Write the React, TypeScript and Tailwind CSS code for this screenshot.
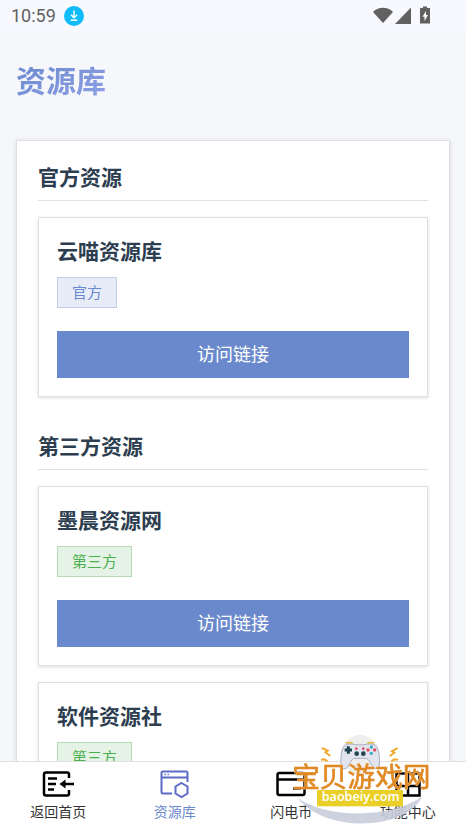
import clsx from "clsx";
import type { ReactNode } from "react";

type Resource = { name: string; tag: string; official?: boolean };

const sections: { title: string; items: Resource[] }[] = [
  {
    title: "官方资源",
    items: [{ name: "云喵资源库", tag: "官方", official: true }],
  },
  {
    title: "第三方资源",
    items: [
      { name: "墨晨资源网", tag: "第三方" },
      { name: "软件资源社", tag: "第三方" },
    ],
  },
];

const StatusBar = () => {
  return (
    <div className="flex h-[31px] shrink-0 items-center justify-between bg-[#f8f8ff] pl-[11px] pr-[35px] text-[#616161]">
      <div className="flex items-center gap-2">
        <span className="font-[Roboto,sans-serif] text-[18px]">10:59</span>
        <svg className="size-5" viewBox="0 0 20 20" fill="none">
          <circle cx="10" cy="10" r="10" fill="#0fbcf9" />
          <path
            d="M10 4.5v7M7 8.8l3 3 3-3M6.7 14.2h6.6"
            stroke="#fff"
            strokeWidth="1.4"
          />
        </svg>
      </div>
      <svg className="h-5 w-[58px]" viewBox="0 0 58 20" fill="#616161">
        <path d="M0 6C5.5 0.400 14.5 0.400 20 6L10 17z" />
        <path d="M38 1.500v16.500H22z" />
        <path d="M50 0.500h4v1.500h3v15.500H47V2h3z" />
        <path d="M53 5l-3.500 5.800h2v4.200l3.500-6h-2z" fill="#fff" />
      </svg>
    </div>
  );
};

const ResourceCard = ({ name, tag, official }: Resource) => {
  return (
    <article className="border border-[#e0e0e0] bg-white p-[18px] shadow-[0_1px_3px_rgba(0,0,0,0.14)]">
      <h3 className="text-[21px] font-bold leading-[29px]">{name}</h3>
      <div className="mt-3 flex">
        <span
          className={clsx(
            "border px-[14px] pb-[2px] text-[15px] leading-[27px]",
            official
              ? "border-[#c2cde8] bg-[#e8ecf8] text-[#6a89cc]"
              : "border-[#b5dcb7] bg-[#e4f3e5] text-[#4caf50]"
          )}
        >
          {tag}
        </span>
      </div>
      <button
        type="button"
        className="mt-[23px] block h-[47px] w-full bg-[#6a89cc] pb-[2px] text-[18px] text-white"
      >
        访问链接
      </button>
    </article>
  );
};

const Library = () => {
  return (
    <div className="mx-4 mt-10 flex flex-col gap-[34px] border border-[#e0e0e0] bg-white p-[21px] shadow-[0_1px_5px_rgba(0,0,0,0.12)]">
      {sections.map((section) => (
        <section key={section.title}>
          <h2 className="border-b border-[#e0e0e0] pb-[9px] text-[21px] font-bold leading-[29px]">
            {section.title}
          </h2>
          <div className="mt-4 flex flex-col gap-4">
            {section.items.map((item) => (
              <ResourceCard key={item.name} {...item} />
            ))}
          </div>
        </section>
      ))}
    </div>
  );
};

const BackIcon = () => (
  <svg className="size-8" viewBox="0 0 32 32" fill="none" stroke="#000">
    <path
      d="M27 10V6.500a2 2 0 0 0-2-2H4a2 2 0 0 0-2 2v19a2 2 0 0 0 2 2h21a2 2 0 0 0 2-2V22"
      strokeWidth="2.500"
    />
    <path d="M6 10.500h9M6 16h8M6 21.500h6M22 16h10" strokeWidth="2.400" />
    <path d="M17.500 16l6-4.500v9z" fill="#000" stroke="none" />
  </svg>
);

const LibraryIcon = () => (
  <svg className="size-8" viewBox="0 0 32 32" fill="none" stroke="#5c6bc8">
    <path
      d="M28.500 14V5a1.500 1.500 0 0 0-1.500-1.500H4A1.500 1.500 0 0 0 2.500 5v19A1.500 1.500 0 0 0 4 25.500h9M2.500 9.500h26"
      strokeWidth="2"
    />
    <path d="M5.500 6.500H7M8.500 6.500H10" strokeWidth="1.500" />
    <path d="M22.500 15l6 3.500v7l-6 3.500-6-3.500v-7z" strokeWidth="2" />
  </svg>
);

const CoinIcon = () => (
  <svg className="size-8" viewBox="0 0 32 32" fill="none" stroke="#000">
    <rect x="2.500" y="5" width="27" height="22" rx="2" strokeWidth="2.500" />
    <path d="M2.500 11.500h27M18 20.500h8" strokeWidth="2.500" />
  </svg>
);

const CenterIcon = () => (
  <svg className="size-8" viewBox="0 0 32 32" fill="none" stroke="#000">
    <path d="M4.500 5.500h23v22h-23zM16 5.500v22M4.500 18h23" strokeWidth="2.500" />
  </svg>
);

const tabs: { label: string; icon: ReactNode; active?: boolean }[] = [
  { label: "返回首页", icon: <BackIcon /> },
  { label: "资源库", icon: <LibraryIcon />, active: true },
  { label: "闪电币", icon: <CoinIcon /> },
  { label: "功能中心", icon: <CenterIcon /> },
];

const TabBar = () => {
  return (
    <nav className="grid h-[67px] shrink-0 grid-cols-4 border-t border-[#e0e0e0] bg-white">
      {tabs.map((tab) => (
        <a
          key={tab.label}
          href="#"
          className={clsx(
            "flex flex-col items-center pt-[6px] text-[14px] leading-[22px]",
            tab.active ? "text-[#6a89cc]" : "text-[#333333]"
          )}
        >
          {tab.icon}
          {tab.label}
        </a>
      ))}
    </nav>
  );
};

const SiteMark = () => {
  return (
    <svg
      className="pointer-events-none absolute bottom-0 right-0 h-[103px] w-[186px]"
      viewBox="0 0 558 309"
    >
      <circle cx="240" cy="88" r="58" fill="#eeeeee" />
      <path
        d="M52 218c85 62 280 65 376-4-53 105-292 111-376 4z"
        fill="#c9ccda"
        fillOpacity="0.9"
      />
      <path
        d="M183 122c-2-34 3-60 19-64 12-4 20 2 38 2s27-6 40-2c15 4 20 32 18 62-1 14-15 14-22 2-8-14-12-22-20-22h-31c-9 0-13 10-20 23-6 11-21 12-22-1z"
        fill="#e3e5ee"
        stroke="#a9adbf"
        strokeWidth="3"
      />
      <path
        d="M198 55q10-5 20 0M262 55q10-5 20 0"
        fill="none"
        stroke="#e5b943"
        strokeWidth="5"
      />
      <path d="M205 64v22M194 75h22" stroke="#20434f" strokeWidth="9" />
      <g fill="#20434f">
        <circle cx="230" cy="86" r="7" />
        <circle cx="250" cy="86" r="7" />
      </g>
      <g fill="#e24a67">
        <circle cx="229" cy="71" r="4" />
        <circle cx="250" cy="71" r="4" />
        <circle cx="264" cy="75" r="5" />
        <circle cx="284" cy="75" r="5" />
      </g>
      <circle cx="274" cy="66" r="5" fill="#36a9c7" />
      <circle cx="274" cy="85" r="5" fill="#36a9c7" />
      <path
        d="M126 69l17 8-7 5 15 11M353 69l-17 10 7 4-14 11M123 104l11-1 8 6M354 104l-11-1-9 6"
        fill="none"
        stroke="#f0ab2c"
        strokeWidth="6"
      />
      <rect x="111" y="195" width="258" height="49" fill="#e9cf28" />
      <text
        x="242"
        y="229"
        textAnchor="middle"
        className="fill-white font-['Open_Sans',sans-serif] text-[38px] font-semibold"
      >
        baobeiy.com
      </text>
      <text
        x="244"
        y="186"
        textAnchor="middle"
        className="fill-[#e08a25] stroke-[#e08a25] stroke-[2px] text-[83px] font-normal drop-shadow-[0_0_1px_#fff]"
      >
        宝贝游戏网
      </text>
    </svg>
  );
};

export default function App() {
  return (
    <div className="relative flex h-screen flex-col bg-[#f5f7fb] font-['Noto_Sans_CJK_SC',sans-serif] text-[#2c3e50]">
      <StatusBar />
      <main className="min-h-0 flex-1 overflow-hidden">
        <h1 className="ml-4 mt-7 w-fit bg-linear-to-br from-[#6a89cc] to-[#8e9fe6] bg-clip-text text-[30px] font-bold leading-[41px] text-transparent">
          资源库
        </h1>
        <Library />
      </main>
      <TabBar />
      <SiteMark />
    </div>
  );
}
